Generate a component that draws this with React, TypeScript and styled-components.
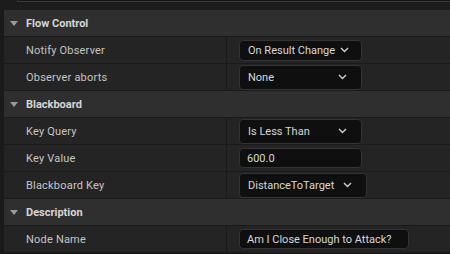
import styled, { createGlobalStyle } from "styled-components";

const GlobalStyle = createGlobalStyle`
  body {
    margin: 0;
    background: #1a1a1a;
    font-family: Roboto, "Liberation Sans", sans-serif;
  }
`;

const Panel = styled.div`
  width: 450px;
  height: 254px;
  overflow: hidden;
  padding-left: 4px;
  box-sizing: border-box;
  background: #1a1a1a;
`;

const TopStrip = styled.div`
  height: 10px;
  background: #1c1c1c;
  margin-left: -4px;
`;

const SearchTail = styled.div`
  height: 1px;
  margin-left: 17px;
  background: #151515;
  border-left: 1px solid #3b3b3b;
  border-bottom: 1px solid #3b3b3b;
  border-bottom-left-radius: 4px;
`;

const Header = styled.div`
  height: 26px;
  border-bottom: 1px solid #1a1a1a;
  background: #2f2f2f;
  display: flex;
  align-items: center;
  padding-left: 6px;
  gap: 8px;
  color: #d6d6d6;
  font-size: 11px;
  font-weight: 700;
`;

const Arrow = styled.span`
  width: 0;
  height: 0;
  border-left: 4px solid transparent;
  border-right: 4px solid transparent;
  border-top: 5px solid #9a9a9a;
`;

const Row = styled.div`
  height: 26px;
  border-bottom: 1px solid #1a1a1a;
  display: grid;
  grid-template-columns: 222px 1fr;
  column-gap: 1px;
  background: #1a1a1a;
`;

const Label = styled.div`
  background: #242424;
  display: flex;
  align-items: center;
  padding-left: 22px;
  color: #c4c4c4;
  font-size: 11px;
  letter-spacing: 0.2px;
`;

const Value = styled.div`
  background: #242424;
  display: flex;
  align-items: center;
  padding-left: 12px;
`;

const Box = styled.div<{ $w: number; $h: number; $combo?: boolean }>`
  width: ${(p) => p.$w}px;
  height: ${(p) => p.$h}px;
  box-sizing: border-box;
  background: #0f0f0f;
  border: 1px solid #333333;
  border-radius: 4px;
  display: flex;
  align-items: center;
  justify-content: space-between;
  gap: 5px;
  padding: 0 ${(p) => (p.$combo ? 14 : 6)}px 0 ${(p) => (p.$combo ? 8 : 7)}px;
  color: #d8d8d8;
  font-size: 11px;
  white-space: nowrap;
`;

const Chevron = () => (
  <svg width="9" height="6" viewBox="0 0 9 6" style={{ flexShrink: 0 }}>
    <path d="M1 1 L4.5 4.5 L8 1" stroke="#d0d0d0" strokeWidth="1.4" fill="none" />
  </svg>
);

type Field = {
  label: string;
  value: string;
  w: number;
  h: number;
  combo?: boolean;
};

const sections: { title: string; fields: Field[] }[] = [
  {
    title: "Flow Control",
    fields: [
      { label: "Notify Observer", value: "On Result Change", w: 123, h: 21, combo: true },
      { label: "Observer aborts", value: "None", w: 123, h: 25, combo: true },
    ],
  },
  {
    title: "Blackboard",
    fields: [
      { label: "Key Query", value: "Is Less Than", w: 123, h: 25, combo: true },
      { label: "Key Value", value: "600.0", w: 123, h: 20 },
      { label: "Blackboard Key", value: "DistanceToTarget", w: 128, h: 25, combo: true },
    ],
  },
  {
    title: "Description",
    fields: [{ label: "Node Name", value: "Am I Close Enough to Attack?", w: 170, h: 20 }],
  },
];

function App() {
  return (
    <>
      <GlobalStyle />
      <Panel>
        <TopStrip>
          <SearchTail />
        </TopStrip>
        {sections.map((s) => (
          <div key={s.title}>
            <Header>
              <Arrow />
              {s.title}
            </Header>
            {s.fields.map((f) => (
              <Row key={f.label}>
                <Label>{f.label}</Label>
                <Value>
                  <Box $w={f.w} $h={f.h} $combo={f.combo}>
                    <span>{f.value}</span>
                    {f.combo && <Chevron />}
                  </Box>
                </Value>
              </Row>
            ))}
          </div>
        ))}
      </Panel>
    </>
  );
}

export default App;
